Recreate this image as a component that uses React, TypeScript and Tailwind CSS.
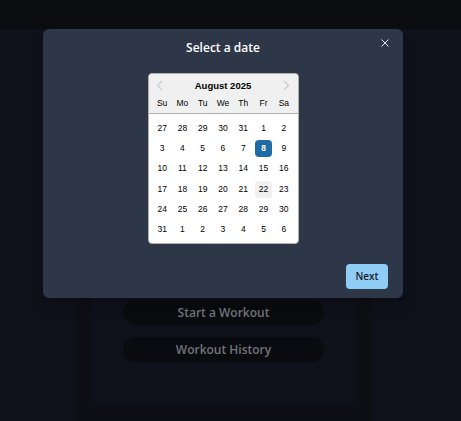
const DAY_NAMES = ["Su", "Mo", "Tu", "We", "Th", "Fr", "Sa"];

const WEEKS: number[][] = [
  [27, 28, 29, 30, 31, 1, 2],
  [3, 4, 5, 6, 7, 8, 9],
  [10, 11, 12, 13, 14, 15, 16],
  [17, 18, 19, 20, 21, 22, 23],
  [24, 25, 26, 27, 28, 29, 30],
  [31, 1, 2, 3, 4, 5, 6],
];

const Chevron = ({ dir }: { dir: "left" | "right" }) => (
  <svg width="7" height="11" viewBox="0 0 7 11" fill="none">
    <polyline
      points={dir === "left" ? "6,1 1.5,5.5 6,10" : "1,1 5.5,5.5 1,10"}
      stroke="#cccccc"
      strokeWidth="1.4"
    />
  </svg>
);

const Calendar = () => (
  <div className="relative w-[151px] rounded-[4px] border border-[#aeaeae] bg-white font-['Liberation_Sans',Arial,sans-serif] text-black">
    <div className="relative rounded-t-[4px] border-b border-[#aeaeae] bg-[#f0f0f0] px-[3.5px] pt-[6px] pb-[3px]">
      <button className="absolute left-[7px] top-[5px] flex h-[12px] w-[8px] items-center justify-center">
        <Chevron dir="left" />
      </button>
      <button className="absolute right-[7px] top-[5px] flex h-[12px] w-[8px] items-center justify-center">
        <Chevron dir="right" />
      </button>
      <div className="flex h-[12px] items-center justify-center text-[9.5px] font-bold leading-none">
        August 2025
      </div>
      <div className="mt-[4px] grid h-[14px] grid-cols-7 items-center">
        {DAY_NAMES.map(d => (
          <div key={d} className="text-center text-[8.5px] leading-none">
            {d}
          </div>
        ))}
      </div>
    </div>
    <div className="px-[3.5px] pt-[4px] pb-[3px]">
      {WEEKS.map((week, wi) => (
        <div key={wi} className="grid h-[20.3px] grid-cols-7 items-center">
          {week.map((d, di) => {
            const selected = wi === 1 && di === 5;
            const keyed = wi === 3 && di === 5;
            return (
              <div key={di} className="flex items-center justify-center">
                <span
                  className={`flex h-[17px] w-[17px] items-center justify-center rounded-[4px] text-[8.5px] leading-none ${
                    selected ? "bg-[#216ba5] font-bold text-white" : keyed ? "bg-[#f0f0f0]" : ""
                  }`}
                >
                  {d}
                </span>
              </div>
            );
          })}
        </div>
      ))}
    </div>
  </div>
);

export default function App() {
  return (
    <div className="relative h-[421px] w-full overflow-hidden bg-[#0e1119] font-['Open_Sans',sans-serif]">
      {/* dimmed page behind the dialog */}
      <div className="h-[29px] bg-[#0b0c10]" />
      <div className="flex justify-center pr-[14px] pt-[16px]">
        <div className="w-[297px] bg-[#0d0f15] px-[17px] pt-[17px] pb-[20px]">
          <div className="flex h-[343px] flex-col items-center gap-[12px] rounded-md bg-[#0e1119] pt-[238px]">
            <button className="h-[25px] w-[201px] rounded-full bg-[#0a0b0e] text-[12px] font-semibold text-[#6f747d]">
              Start a Workout
            </button>
            <button className="h-[25px] w-[201px] rounded-full bg-[#0a0b0e] text-[12px] font-semibold text-[#6f747d]">
              Workout History
            </button>
          </div>
        </div>
      </div>

      {/* dialog */}
      <div className="absolute left-[43px] top-[29px] flex h-[269px] w-[360px] flex-col rounded-md bg-[#2d3748] shadow-lg">
        <div className="flex h-[37px] items-center justify-center text-[12px] font-semibold text-white">
          Select a date
        </div>
        <button className="absolute right-[6px] top-[2px] flex h-[24px] w-[24px] items-center justify-center">
          <svg width="8" height="8" viewBox="0 0 8 8" fill="none">
            <path d="M0.5 0.5 L7.5 7.5 M7.5 0.5 L0.5 7.5" stroke="#e2e8f0" strokeWidth="1" />
          </svg>
        </button>
        <div className="flex justify-center pt-[7px]">
          <Calendar />
        </div>
        <div className="flex-1" />
        <div className="flex justify-end pr-[15px] pb-[9px]">
          <button className="h-[25px] w-[42px] rounded-[4px] bg-[#90cdf4] text-[10px] font-semibold text-[#1a202c]">
            Next
          </button>
        </div>
      </div>
    </div>
  );
}
